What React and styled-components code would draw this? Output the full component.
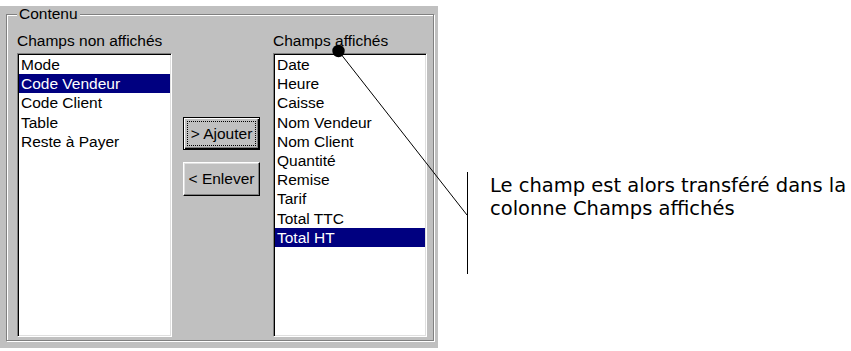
import React from "react";
import styled, { createGlobalStyle, css } from "styled-components";

const GlobalStyle = createGlobalStyle`
  body {
    margin: 0;
    background: #fff;
  }
`;

const Page = styled.div`
  position: relative;
  display: flex;
  align-items: flex-start;
  width: 851px;
  height: 351px;
  font-family: "Liberation Sans", Arial, sans-serif;
  color: #000;
`;

const Dialog = styled.div`
  margin-top: 6px;
  width: 438px;
  height: 342px;
  padding-left: 6px;
  box-sizing: border-box;
  background: #c0c0c0;
`;

const Group = styled.fieldset`
  margin: 0;
  padding: 9px 0 0 10px;
  width: 428px;
  height: 335px;
  box-sizing: border-box;
  border: 1px solid #808080;
  box-shadow: inset 1px 1px 0 #fff, 1px 1px 0 #fff;
`;

/* chrome already offsets the legend by the fieldset padding */
const Legend = styled.legend`
  margin-left: 0;
  padding: 0 2px;
  font-size: 15.5px;
  line-height: 16px;
  background: #c0c0c0;
`;

const Row = styled.div`
  display: flex;
  align-items: flex-start;
`;

const Column = styled.div`
  display: flex;
  flex-direction: column;
  width: ${(p) => p.$width}px;
`;

const Label = styled.div`
  font-size: 15.5px;
  line-height: 19px;
  height: 19px;
  margin-bottom: 3px;
  white-space: nowrap;
`;

const ListBox = styled.ul`
  list-style: none;
  margin: 0;
  padding: 1px;
  height: 284px;
  box-sizing: border-box;
  background: #fff;
  border: 1px solid;
  border-color: #808080 #fff #fff #808080;
  box-shadow: inset 1px 1px 0 #000, inset -1px -1px 0 #dfdfdf;
`;

const Item = styled.li`
  font-size: 15.5px;
  line-height: 19.2px;
  padding: 0 2px;
  white-space: nowrap;
  ${(p) =>
    p.$selected &&
    css`
      background: #000080;
      color: #fff;
    `}
`;

const Actions = styled.div`
  display: flex;
  flex-direction: column;
  gap: 12px;
  width: 101px;
  box-sizing: border-box;
  padding: 86px 0 0 11px;
`;

const Button = styled.button`
  display: flex;
  width: 77px;
  height: ${(p) => (p.$default ? 33 : 34)}px;
  padding: 3px;
  box-sizing: border-box;
  background: #c0c0c0;
  font-family: "Liberation Sans", Arial, sans-serif;
  font-size: 15.5px;
  color: #000;
  border: 1px solid;
  ${(p) =>
    p.$default
      ? css`
          border-color: #000;
          box-shadow: inset 1px 1px 0 #fff, inset -1px -1px 0 #000,
            inset -2px -2px 0 #808080;
        `
      : css`
          border-color: #fff #000 #000 #fff;
          box-shadow: inset -1px -1px 0 #808080, inset 1px 1px 0 #dfdfdf;
        `}
`;

const Caption = styled.span`
  flex: 1;
  display: flex;
  align-items: center;
  justify-content: center;
  border: 1px dotted ${(p) => (p.$focused ? "#000" : "transparent")};
  white-space: nowrap;
`;

const Note = styled.div`
  margin: 172px 0 0 29px;
  height: 100px;
  padding: 2px 0 0 22px;
  border-left: 1px solid #000;
  font-family: "DejaVu Sans", Verdana, sans-serif;
  font-size: 19.5px;
  line-height: 23px;
  white-space: nowrap;
`;

const Callout = styled.svg`
  position: absolute;
  left: 0;
  top: 0;
  pointer-events: none;
`;

const hidden = ["Mode", "Code Vendeur", "Code Client", "Table", "Reste à Payer"];
const shown = [
  "Date",
  "Heure",
  "Caisse",
  "Nom Vendeur",
  "Nom Client",
  "Quantité",
  "Remise",
  "Tarif",
  "Total TTC",
  "Total HT",
];

export default function App() {
  return (
    <>
      <GlobalStyle />
      <Page>
        <Dialog>
          <Group>
            <Legend>Contenu</Legend>
            <Row>
              <Column $width={155}>
                <Label>Champs non affichés</Label>
                <ListBox>
                  {hidden.map((f) => (
                    <Item key={f} $selected={f === "Code Vendeur"}>
                      {f}
                    </Item>
                  ))}
                </ListBox>
              </Column>
              <Actions>
                <Button $default>
                  <Caption $focused>&gt; Ajouter</Caption>
                </Button>
                <Button>
                  <Caption>&lt; Enlever</Caption>
                </Button>
              </Actions>
              <Column $width={154}>
                <Label>Champs affichés</Label>
                <ListBox>
                  {shown.map((f) => (
                    <Item key={f} $selected={f === "Total HT"}>
                      {f}
                    </Item>
                  ))}
                </ListBox>
              </Column>
            </Row>
          </Group>
        </Dialog>
        <Note>
          Le champ est alors transféré dans la
          <br />
          colonne Champs affichés
        </Note>
        <Callout width="851" height="351">
          <line x1="338.5" y1="51" x2="467" y2="215" stroke="#000" strokeWidth="1" />
          <circle cx="338.5" cy="51" r="6.2" fill="#000" />
        </Callout>
      </Page>
    </>
  );
}
